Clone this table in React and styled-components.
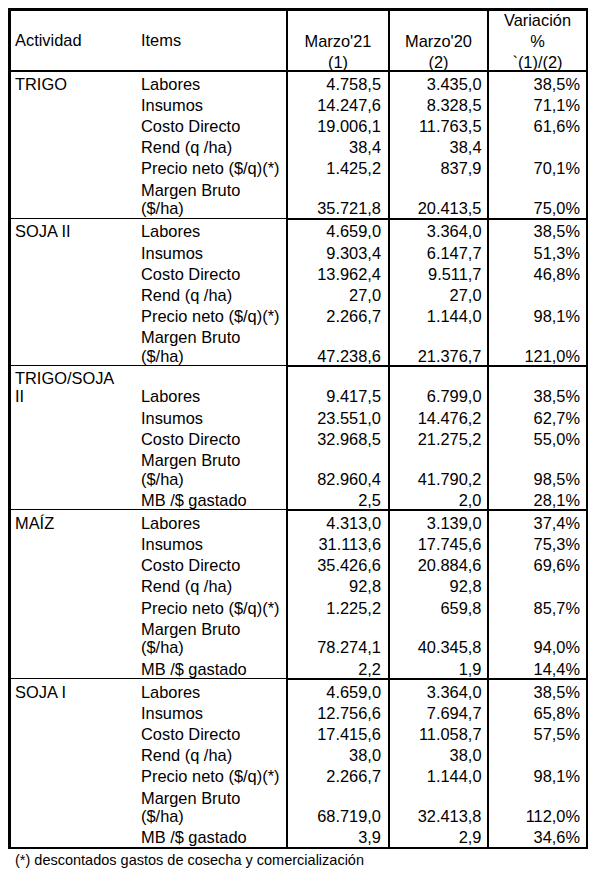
import React from "react";
import styled, { createGlobalStyle } from "styled-components";

const GlobalStyle = createGlobalStyle`
  html, body {
    margin: 0;
    padding: 0;
    background: #ffffff;
  }
  body {
    font-family: "Liberation Sans", Arial, sans-serif;
    color: #000000;
  }
`;

const sections = [
  {
    activity: ["TRIGO"],
    rows: [
      { item: ["Labores"], m21: "4.758,5", m20: "3.435,0", v: "38,5%" },
      { item: ["Insumos"], m21: "14.247,6", m20: "8.328,5", v: "71,1%" },
      { item: ["Costo Directo"], m21: "19.006,1", m20: "11.763,5", v: "61,6%" },
      { item: ["Rend (q /ha)"], m21: "38,4", m20: "38,4", v: "" },
      { item: ["Precio neto ($/q)(*)"], m21: "1.425,2", m20: "837,9", v: "70,1%" },
      { item: ["Margen Bruto", "($/ha)"], m21: "35.721,8", m20: "20.413,5", v: "75,0%" },
    ],
  },
  {
    activity: ["SOJA II"],
    rows: [
      { item: ["Labores"], m21: "4.659,0", m20: "3.364,0", v: "38,5%" },
      { item: ["Insumos"], m21: "9.303,4", m20: "6.147,7", v: "51,3%" },
      { item: ["Costo Directo"], m21: "13.962,4", m20: "9.511,7", v: "46,8%" },
      { item: ["Rend (q /ha)"], m21: "27,0", m20: "27,0", v: "" },
      { item: ["Precio neto ($/q)(*)"], m21: "2.266,7", m20: "1.144,0", v: "98,1%" },
      { item: ["Margen Bruto", "($/ha)"], m21: "47.238,6", m20: "21.376,7", v: "121,0%" },
    ],
  },
  {
    activity: ["TRIGO/SOJA", "II"],
    rows: [
      { item: ["Labores"], m21: "9.417,5", m20: "6.799,0", v: "38,5%" },
      { item: ["Insumos"], m21: "23.551,0", m20: "14.476,2", v: "62,7%" },
      { item: ["Costo Directo"], m21: "32.968,5", m20: "21.275,2", v: "55,0%" },
      { item: ["Margen Bruto", "($/ha)"], m21: "82.960,4", m20: "41.790,2", v: "98,5%" },
      { item: ["MB /$ gastado"], m21: "2,5", m20: "2,0", v: "28,1%" },
    ],
  },
  {
    activity: ["MAÍZ"],
    rows: [
      { item: ["Labores"], m21: "4.313,0", m20: "3.139,0", v: "37,4%" },
      { item: ["Insumos"], m21: "31.113,6", m20: "17.745,6", v: "75,3%" },
      { item: ["Costo Directo"], m21: "35.426,6", m20: "20.884,6", v: "69,6%" },
      { item: ["Rend (q /ha)"], m21: "92,8", m20: "92,8", v: "" },
      { item: ["Precio neto ($/q)(*)"], m21: "1.225,2", m20: "659,8", v: "85,7%" },
      { item: ["Margen Bruto", "($/ha)"], m21: "78.274,1", m20: "40.345,8", v: "94,0%" },
      { item: ["MB /$ gastado"], m21: "2,2", m20: "1,9", v: "14,4%" },
    ],
  },
  {
    activity: ["SOJA I"],
    rows: [
      { item: ["Labores"], m21: "4.659,0", m20: "3.364,0", v: "38,5%" },
      { item: ["Insumos"], m21: "12.756,6", m20: "7.694,7", v: "65,8%" },
      { item: ["Costo Directo"], m21: "17.415,6", m20: "11.058,7", v: "57,5%" },
      { item: ["Rend (q /ha)"], m21: "38,0", m20: "38,0", v: "" },
      { item: ["Precio neto ($/q)(*)"], m21: "2.266,7", m20: "1.144,0", v: "98,1%" },
      { item: ["Margen Bruto", "($/ha)"], m21: "68.719,0", m20: "32.413,8", v: "112,0%" },
      { item: ["MB /$ gastado"], m21: "3,9", m20: "2,9", v: "34,6%" },
    ],
  },
];

const lines = (parts) =>
  parts.map((p, i) => (
    <React.Fragment key={i}>
      {i > 0 && <br />}
      {p}
    </React.Fragment>
  ));

const App = () => {
  return (
    <>
      <GlobalStyle />
      <Page>
        <Table>
          <thead>
            <tr>
              <HeadCell $w={126} $pl={4} $align="left" $valign="middle">
                Actividad
              </HeadCell>
              <HeadCell $w={151} $pl={4} $align="left" $valign="middle" $divider>
                Items
              </HeadCell>
              <HeadCell $w={102} $divider>
                <HeadText>
                  Marzo'21
                  <br />
                  (1)
                </HeadText>
              </HeadCell>
              <HeadCell $w={99} $divider>
                <HeadText>
                  Marzo'20
                  <br />
                  (2)
                </HeadText>
              </HeadCell>
              <HeadCell $w={97}>
                <HeadText>
                  Variación
                  <br />%<br />
                  `(1)/(2)
                </HeadText>
              </HeadCell>
            </tr>
          </thead>
          <tbody>
            {sections.map((s, si) =>
              s.rows.map((r, ri) => {
                const first = ri === 0 && si > 0;
                return (
                  <tr key={`${si}-${ri}`}>
                    <TextCell $first={first} $pl={4}>
                      {ri === 0 ? lines(s.activity) : null}
                    </TextCell>
                    <TextCell $first={first} $pl={4} $divider>
                      {lines(r.item)}
                    </TextCell>
                    <NumCell $first={first} $pr={7} $divider>
                      {r.m21}
                    </NumCell>
                    <NumCell $first={first} $pr={5.5} $divider>
                      {r.m20}
                    </NumCell>
                    <NumCell $first={first} $pr={6}>
                      {r.v}
                    </NumCell>
                  </tr>
                );
              })
            )}
          </tbody>
        </Table>
        <Footnote>(*) descontados gastos de cosecha y comercialización</Footnote>
      </Page>
    </>
  );
};

const Page = styled.div`
  padding: 8px;
  width: 580px;
`;

const Table = styled.table`
  width: 580px;
  table-layout: fixed;
  border-collapse: separate;
  border-spacing: 0;
  border-top: 3px solid #000;
  border-left: 3px solid #000;
  border-right: 2px solid #000;
  border-bottom: 2px solid #000;
  font-size: 16.4px;
`;

const HeadCell = styled.th`
  box-sizing: border-box;
  width: ${(p) => p.$w}px;
  height: 61px;
  padding: 0 0 0 ${(p) => p.$pl || 0}px;
  font-weight: normal;
  line-height: 19.7px;
  text-align: ${(p) => p.$align || "center"};
  vertical-align: ${(p) => p.$valign || "bottom"};
  border-bottom: 2px solid #000;
  border-right: ${(p) => (p.$divider ? "2px solid #000" : "none")};
  white-space: nowrap;
`;

const HeadText = styled.div`
  line-height: 21px;
  margin-top: -3px;
  margin-bottom: -2.5px;
`;

const TextCell = styled.td`
  box-sizing: border-box;
  padding: 2.7px 0 0 ${(p) => p.$pl}px;
  line-height: 18.5px;
  text-align: left;
  vertical-align: bottom;
  white-space: nowrap;
  border-top: ${(p) => (p.$first ? "1px solid #000" : "none")};
  border-right: ${(p) => (p.$divider ? "2px solid #000" : "none")};
`;

const NumCell = styled.td`
  box-sizing: border-box;
  padding: 2.7px ${(p) => p.$pr}px 0 0;
  line-height: 18.5px;
  text-align: right;
  vertical-align: bottom;
  white-space: nowrap;
  border-top: ${(p) => (p.$first ? "2px solid #000" : "none")};
  border-right: ${(p) => (p.$divider ? "2px solid #000" : "none")};
`;

const Footnote = styled.div`
  margin-top: 2px;
  padding-left: 7px;
  font-size: 14.5px;
  line-height: 18px;
`;

export default App;
